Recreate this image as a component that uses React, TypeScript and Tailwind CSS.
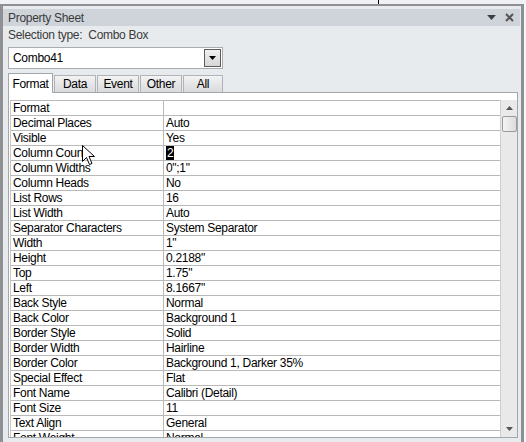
import React from "react";

const rows: [string, string][] = [
  ["Format", ""],
  ["Decimal Places", "Auto"],
  ["Visible", "Yes"],
  ["Column Count", "2"],
  ["Column Widths", '0";1"'],
  ["Column Heads", "No"],
  ["List Rows", "16"],
  ["List Width", "Auto"],
  ["Separator Characters", "System Separator"],
  ["Width", '1"'],
  ["Height", '0.2188"'],
  ["Top", '1.75"'],
  ["Left", '8.1667"'],
  ["Back Style", "Normal"],
  ["Back Color", "Background 1"],
  ["Border Style", "Solid"],
  ["Border Width", "Hairline"],
  ["Border Color", "Background 1, Darker 35%"],
  ["Special Effect", "Flat"],
  ["Font Name", "Calibri (Detail)"],
  ["Font Size", "11"],
  ["Text Align", "General"],
  ["Font Weight", "Normal"],
];

const tabs = ["Format", "Data", "Event", "Other", "All"];

function Triangle({ up = false, className = "" }: { up?: boolean; className?: string }) {
  return (
    <svg width="7" height="4" viewBox="0 0 7 4" className={className}>
      <path d={up ? "M0 4 L3.5 0 L7 4 Z" : "M0 0 L7 0 L3.5 4 Z"} fill="currentColor" />
    </svg>
  );
}

function Cursor() {
  return (
    <svg width="13" height="21" viewBox="0 0 13 21" className="absolute left-[82px] top-[145px]">
      <path
        d="M0.5 0.5 L0.5 16.5 L4.5 12.5 L7.5 19.5 L10 18.5 L7 11.5 L12.5 11.5 Z"
        fill="white"
        stroke="black"
        strokeWidth="1"
        strokeLinejoin="round"
      />
    </svg>
  );
}

export default function App() {
  return (
    <div className="relative w-[526px] h-[442px] overflow-hidden bg-[#f0f1f3] font-['Liberation_Sans',Arial,sans-serif] text-[12px] tracking-[-0.3px]">
      {/* strip above the pane */}
      <div className="h-[4px] flex">
        <div className="ml-[378px] w-px h-full bg-black" />
      </div>

      <div className="flex">
        <div className="w-[524px] h-[438px] border-l-[3px] border-r-[3px] border-t-2 border-[#8e9094] bg-[#e8ebee] flex flex-col">
          <div className="h-[3px]" />
          {/* title bar */}
          <div className="h-[17px] mr-[1px] bg-[#cfd4da] flex items-center justify-between pl-[5px] pr-[6px] text-[#3a3a3a]">
            <span className="leading-none">Property Sheet</span>
            <div className="flex items-center gap-[9px]">
              <Triangle className="w-[9px] h-[5px] text-[#3c3c3c]" />
              <svg width="9" height="9" viewBox="0 0 9 9">
                <path d="M1 1 L8 8 M8 1 L1 8" stroke="#555" strokeWidth="2" />
              </svg>
            </div>
          </div>

          <div className="pl-[5px] h-[16px] mt-[1px] flex items-center text-[#3a3a3a]">
            Selection type:&nbsp;&nbsp;Combo Box
          </div>

          {/* combo */}
          <div className="ml-[5px] mt-[4px] w-[215px] h-[22px] bg-white border border-[#a9acb0] flex items-center justify-between pl-[4px] pr-[1px]">
            <span className="text-black">Combo41</span>
            <div className="w-[17px] h-[18px] border border-[#5c5c5c] bg-gradient-to-b from-[#f0f0f0] to-[#d6d6d6] flex items-center justify-center">
              <Triangle className="w-[7px] h-[4px] text-black" />
            </div>
          </div>

          {/* tabs */}
          <div className="ml-[5px] mt-[3px] h-[20px] flex items-end">
            {tabs.map((t, i) =>
              i === 0 ? (
                <div
                  key={t}
                  className="w-[45px] h-[20px] -mb-px relative z-10 bg-white border border-b-0 border-[#a3a6aa] flex items-center justify-center text-black"
                >
                  {t}
                </div>
              ) : (
                <div
                  key={t}
                  className={`h-[17px] ml-[1px] border border-b-0 border-[#b0b3b7] bg-gradient-to-b from-[#f3f3f3] to-[#d9dadc] flex items-center justify-center text-black ${
                    i === 4 ? "w-[40px]" : "w-[42px]"
                  }`}
                >
                  {t}
                </div>
              )
            )}
          </div>

          {/* tab panel */}
          <div className="ml-[5px] w-[510px] h-[346px] bg-white border border-[#a3a6aa] pt-[7px] pl-px flex">
            <div className="flex-1 h-[337px] overflow-hidden border-l border-[#c9c9c9]">
              {rows.map(([k, v], i) => (
                <div key={i} className="h-[15px] border-t border-[#b9b9b9] flex leading-[14px] text-black">
                  <div className="w-[153px] pl-[2px] border-r border-[#b9b9b9] whitespace-nowrap overflow-hidden">
                    {k}
                  </div>
                  <div className="flex-1 pl-[2px] whitespace-nowrap">
                    {k === "Column Count" ? <span className="bg-black text-white px-px">{v}</span> : v}
                  </div>
                </div>
              ))}
            </div>
            <div className="w-[17px] h-[337px] bg-[#e9e9e9] border-l border-[#cfcfcf] flex flex-col items-center">
              <Triangle up className="mt-[6px] w-[7px] h-[4px] text-[#555]" />
              <div className="mt-[6px] w-[15px] h-[16px] border border-[#9a9a9a] rounded-[2px] bg-gradient-to-r from-[#f4f4f4] to-[#dcdcdc]" />
              <div className="flex-1" />
              <Triangle className="mb-[6px] w-[7px] h-[4px] text-[#555]" />
            </div>
          </div>
        </div>
        <div className="w-[2px] bg-[#f7f7f7]" />
      </div>

      <Cursor />
    </div>
  );
}
